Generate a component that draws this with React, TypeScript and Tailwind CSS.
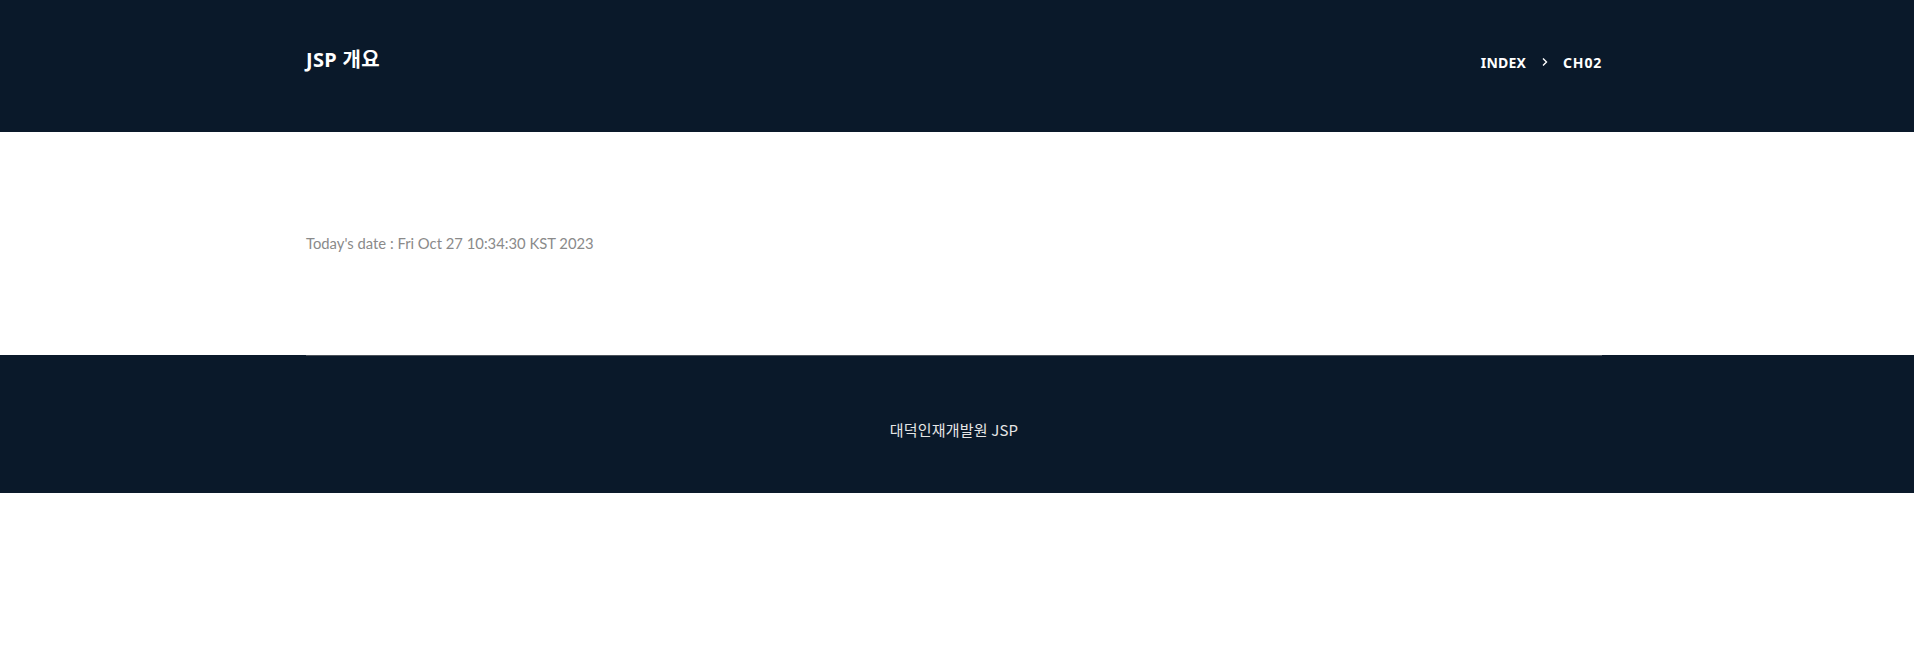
const App = () => {
  return (
    <div className="w-full min-h-[661px] bg-white">
      <header className="w-full h-[132px] bg-[#0a192a] pr-[6px]">
        <div className="w-[1296px] mx-auto h-full flex items-center justify-between pb-[12px]">
          <h1 className="text-white text-[20px] font-bold tracking-[0.3px] font-['Noto_Sans','Noto_Sans_CJK_KR',sans-serif]">
            JSP 개요
          </h1>
          <nav className="flex items-center text-white text-[14px] font-bold tracking-[0.2px] font-['Noto_Sans',sans-serif] pt-[4px]">
            <span>INDEX</span>
            <svg width="10" height="10" viewBox="0 0 10 10" fill="none" className="ml-[14px] mr-[13px]">
              <path d="M3 1.5 L6.5 5 L3 8.5" stroke="white" strokeWidth="1.4" />
            </svg>
            <span className="tracking-[0.8px]">CH02</span>
          </nav>
        </div>
      </header>

      <main className="w-full h-[223px] pr-[6px] flex items-center">
        <div className="w-[1296px] mx-auto">
          <p className="text-[14.8px] text-[#8a8a8a] font-['Lato','Liberation_Sans',sans-serif]">
            Today's date : Fri Oct 27 10:34:30 KST 2023
          </p>
        </div>
      </main>

      <footer className="w-full h-[138px] bg-[#0a192a] pr-[6px]">
        <div className="w-[1296px] mx-auto h-full border-t border-[#4b525a] flex items-center justify-center pt-[12px]">
          <p className="text-[15px] text-[#e6e6e6] tracking-[0.2px] font-['Noto_Sans_CJK_KR','Noto_Sans',sans-serif]">
            대덕인재개발원 JSP
          </p>
        </div>
      </footer>
    </div>
  );
};

export default App;
